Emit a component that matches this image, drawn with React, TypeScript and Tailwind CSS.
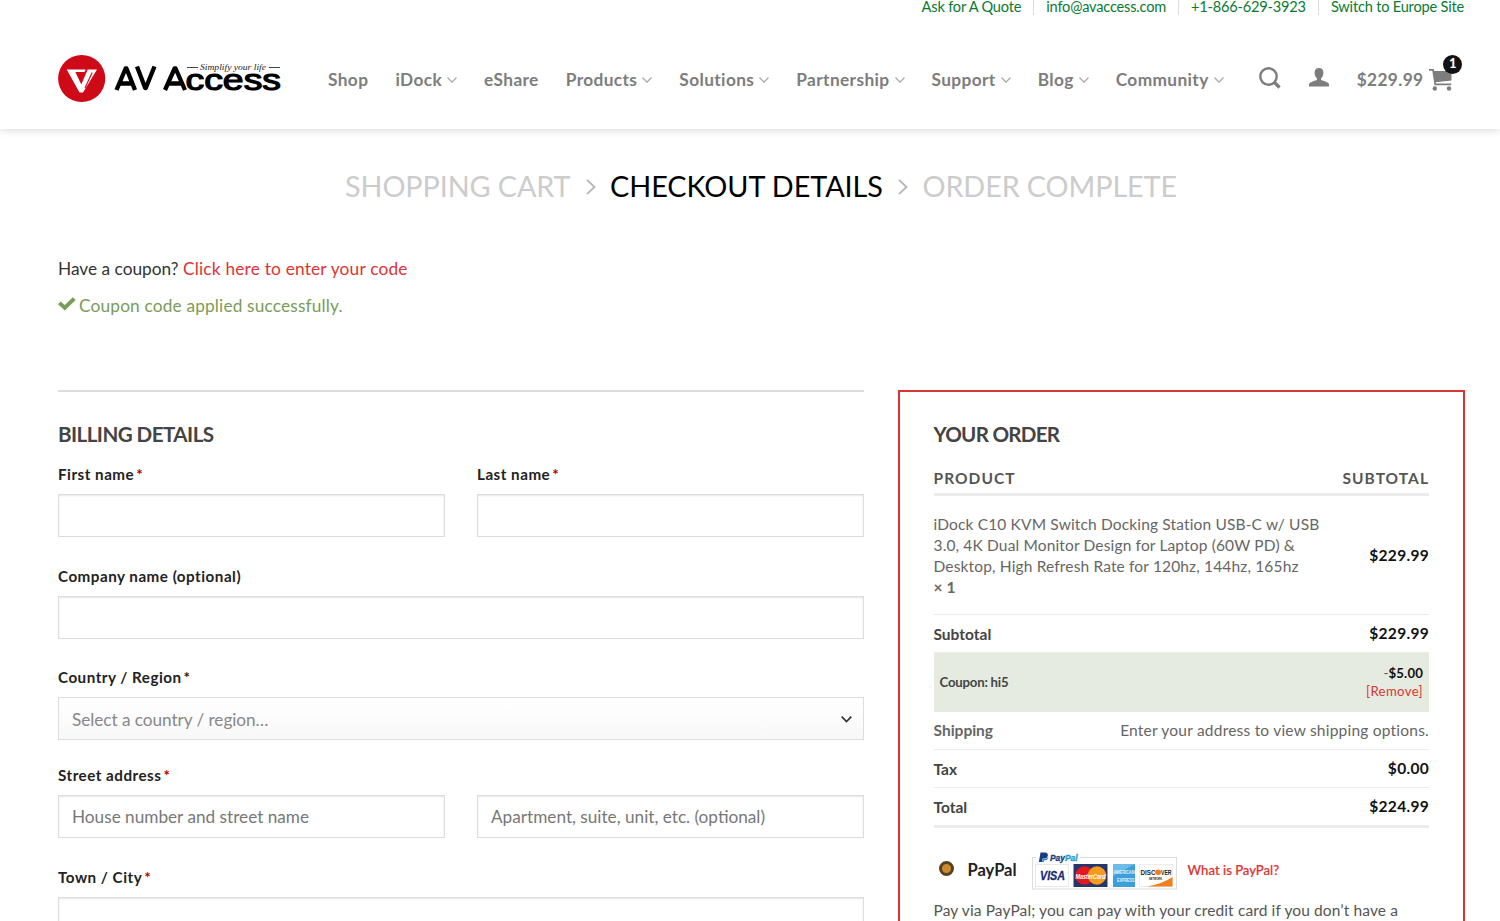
import React from 'react'
import clsx from 'clsx'

interface NavItem {
    label: string
    hasMenu?: boolean
}

interface FieldProps {
    label: string
    required?: boolean
    placeholder?: string
    className?: string
}

const NAV_ITEMS: NavItem[] = [
    { label: 'Shop' },
    { label: 'iDock', hasMenu: true },
    { label: 'eShare' },
    { label: 'Products', hasMenu: true },
    { label: 'Solutions', hasMenu: true },
    { label: 'Partnership', hasMenu: true },
    { label: 'Support', hasMenu: true },
    { label: 'Blog', hasMenu: true },
    { label: 'Community', hasMenu: true },
]

const TOP_LINKS = ['Ask for A Quote', 'info@avaccess.com', '+1-866-629-3923', 'Switch to Europe Site']

const Logo = () => (
    <svg width="224" height="50" viewBox="0 0 224 50" className="block">
        <circle cx="23.7" cy="24.5" r="23.6" fill="#cf0a18" />
        <path d="M8.700 15.500H27.800l-1.400 2.500H17.300L23.300 30.500 29.700 15.500H39L25 38.500H21.500z" fill="#fff" />
        <path d="M34.200 18.500 27 34" stroke="#cf0a18" strokeWidth="1.100" />
        <g fill="none" stroke="#000" strokeWidth="4.300" strokeLinejoin="round">
            <path d="M58.500 36 67.600 14.500h.9L77 36M61.800 29.500h12" />
            <path d="M79 12.500 87.200 34h.6L96.500 12.500" />
            <path d="M107 36 116.600 14.500h1L127 36M110.800 29.500h13" />
        </g>
        <text
            x="127.5"
            y="35.500"
            textLength="95.5"
            lengthAdjust="spacingAndGlyphs"
            fontFamily="Liberation Sans, sans-serif"
            fontSize="29.500"
            stroke="#000"
            strokeWidth="1.2"
        >
            ccess
        </text>
        <path d="M129 13.500h11M211 13.500h11" stroke="#444" />
        <text
            x="142"
            y="15.500"
            textLength="66"
            lengthAdjust="spacingAndGlyphs"
            fontFamily="Liberation Serif, serif"
            fontStyle="italic"
            fontSize="7.500"
            fill="#222"
        >
            Simplify your life
        </text>
    </svg>
)

const CardLogos = () => (
    <svg width="146" height="38" viewBox="0 0 146 38" className="block">
        <rect x="0.5" y="5.5" width="144" height="31.5" fill="#fff" stroke="#ddd" />
        <rect x="4" y="0" width="44" height="11" fill="#fff" />
        <path d="M8.5 0.5h4.2c2.6 0 3.5 1.3 3.1 3.2-.4 2-1.8 2.9-3.9 2.9h-1.2L10 10H6.900z" fill="#1b3a80" />
        <path d="M11 6.800h1.600c2 0 3.100-.9 3.500-2.600.6 2.300-.5 4-3 4h-.9L11.800 10H9.900z" fill="#1f97d4" />
        <text
            x="18"
            y="9"
            textLength="27.5"
            lengthAdjust="spacingAndGlyphs"
            fontFamily="Liberation Sans, sans-serif"
            fontStyle="italic"
            fontWeight="700"
            fontSize="8.5"
            fill="#1b3a80"
            stroke="#1b3a80"
            strokeWidth="0.3"
        >
            Pay
            <tspan fill="#1f97d4" stroke="#1f97d4">
                Pal
            </tspan>
        </text>
        <rect x="3.5" y="12.5" width="33" height="22" fill="#fff" stroke="#e8e8e8" />
        <text
            x="8"
            y="28"
            textLength="25"
            lengthAdjust="spacingAndGlyphs"
            fontFamily="Liberation Sans, sans-serif"
            fontStyle="italic"
            fontWeight="700"
            fontSize="12"
            fill="#1b2a75"
            stroke="#1b2a75"
            strokeWidth="0.3"
        >
            VISA
        </text>
        <rect x="41.5" y="12" width="34" height="23" fill="#28356b" />
        <circle cx="52.5" cy="23.5" r="9.2" fill="#e4161f" />
        <circle cx="65" cy="23.5" r="9.2" fill="#f59c1e" />
        <text
            x="43.5"
            y="26.5"
            textLength="30"
            lengthAdjust="spacingAndGlyphs"
            fontFamily="Liberation Sans, sans-serif"
            fontStyle="italic"
            fontWeight="700"
            fontSize="8"
            fill="#fff"
        >
            MasterCard
        </text>
        <rect x="81" y="12" width="22" height="23" fill="#3d9fd8" />
        <path d="M81 12h22l-22 12z" fill="#6dbbe8" />
        <g fontFamily="Liberation Sans, sans-serif" fontWeight="700" fontSize="6" fill="#e4f4fc">
            <text x="81.5" y="22" textLength="21" lengthAdjust="spacingAndGlyphs">
                AMERICAN
            </text>
            <text x="85" y="30" textLength="17.5" lengthAdjust="spacingAndGlyphs">
                EXPRESS
            </text>
        </g>
        <rect x="107.5" y="12.5" width="33" height="22" fill="#fff" stroke="#eee" />
        <path d="M115 34.5Q131 31.5 140.5 25v9.500z" fill="#f0801f" />
        <circle cx="126.2" cy="20.3" r="2.8" fill="#f0801f" />
        <g fontFamily="Liberation Sans, sans-serif" fontWeight="700" fill="#222">
            <text x="108.5" y="23" textLength="15" lengthAdjust="spacingAndGlyphs" fontSize="7">
                DISC
            </text>
            <text x="129" y="23" textLength="10.5" lengthAdjust="spacingAndGlyphs" fontSize="7">
                VER
            </text>
            <text x="117" y="28" textLength="13" lengthAdjust="spacingAndGlyphs" fontSize="3">
                NETWORK
            </text>
        </g>
    </svg>
)

const Label = ({ text, required, dark }: { text: string; required?: boolean; dark?: boolean }) => (
    <label className="flex h-[38px] items-center gap-[2px] text-[15.2px] leading-none font-bold tracking-[0.5px] text-[#222]">
        {text}
        {required && <span className={dark ? 'text-[#222]' : 'text-[#b20000]'}>*</span>}
    </label>
)

const inputClass =
    'block h-[43px] w-full border border-[#ddd] bg-white px-[13px] text-[17.2px] text-[#333] shadow-[inset_0_1px_2px_rgba(0,0,0,0.1)] outline-none placeholder:text-[#777]'

const Field = ({ label, required, placeholder, className }: FieldProps) => (
    <div className={clsx('flex-1', className)}>
        <Label text={label} required={required} />
        <input type="text" placeholder={placeholder} className={inputClass} />
    </div>
)

const Header = () => (
    <header className="h-[129px] bg-white shadow-[0_1px_8px_rgba(0,0,0,0.16)]">
        <div className="flex h-[15px] justify-end pr-[36px] text-[14.6px] leading-[14px] tracking-[-0.2px] text-[#0a7a33]">
            {TOP_LINKS.map((link, index) => (
                <a key={link} className={clsx('flex items-center', index > 0 && 'ml-3 border-l border-[#ddd] pl-3')}>
                    <span className="block h-[18px] leading-[16px]">{link}</span>
                </a>
            ))}
        </div>
        <div className="flex h-[114px] items-start pt-[39px] pl-[58px]">
            <Logo />
            <nav className="ml-[46px] flex h-[51px] items-center gap-[27px] text-[17.3px] font-bold tracking-[0.38px] text-[#7d7d7d]">
                {NAV_ITEMS.map(({ label, hasMenu }) => (
                    <a key={label} className="flex items-center">
                        {label}
                        {hasMenu && (
                            <svg
                                viewBox="0 0 10 6"
                                className="ml-[5px] h-[6px] w-[10px] text-[#aaa]"
                                fill="none"
                                stroke="currentColor"
                                strokeWidth="1.3"
                            >
                                <path d="M0.5 0.5 5 5.2 9.5 0.5" />
                            </svg>
                        )}
                    </a>
                ))}
            </nav>
            <div className="ml-[35px] flex h-[51px] items-center text-[#7d7d7d]">
                <svg width="22" height="22" viewBox="0 0 22 22" fill="none" stroke="currentColor" className="-mt-1">
                    <circle cx="9.5" cy="9.5" r="8.2" strokeWidth="2.4" />
                    <path d="m15.5 15.5 5 5" strokeWidth="3.2" />
                </svg>
                <svg width="20" height="19" viewBox="0 0 20 19" fill="currentColor" className="-mt-1 ml-[28px]">
                    <path d="M10 0c3 0 4.4 1.9 4.4 4.7 0 2.2-.9 4.4-2.3 5.5v1.900c3 1 7.2 2.2 7.8 4 .2.7.1 1.900.1 2.400H0c0-.5-.1-1.700.1-2.400.6-1.800 4.800-3 7.800-4v-1.900C6.500 9.100 5.600 6.900 5.600 4.700 5.600 1.900 7 0 10 0z" />
                </svg>
                <span className="ml-[28px] text-[17.3px] font-bold tracking-[0.35px]">$229.99</span>
                <div className="relative ml-[6px]">
                    <svg width="23" height="22" viewBox="0 0 23 22" fill="currentColor">
                        <path d="M0 0h4.700l.5 2H22.500v9.500L6.600 13.300l.3 1.200h15.400v1.700H5.500L3.300 1.700H0z" />
                        <circle cx="5.8" cy="19.5" r="2.2" />
                        <circle cx="20" cy="19.5" r="2.2" />
                    </svg>
                    <span className="absolute -top-[14px] left-[14px] flex h-[19px] w-[19px] items-center justify-center rounded-full bg-[#111] text-[13px] font-black text-white">
                        1
                    </span>
                </div>
            </div>
        </div>
    </header>
)

const BreadcrumbArrow = () => (
    <svg
        viewBox="0 0 10 16"
        className="mr-[14px] ml-[15.5px] h-[16px] w-[10px]"
        fill="none"
        stroke="#b5b5b5"
        strokeWidth="1.8"
    >
        <path d="M1 0.8 8.5 8 1 15.2" />
    </svg>
)

const Breadcrumbs = () => (
    <div className="ml-[345px] flex h-[115px] items-center text-[28.8px] tracking-[-0.1px] text-[#ccc]">
        <span>SHOPPING CART</span>
        <BreadcrumbArrow />
        <span className="tracking-[-0.05px] text-black">CHECKOUT DETAILS</span>
        <BreadcrumbArrow />
        <span>ORDER COMPLETE</span>
    </div>
)

const BillingDetails = () => (
    <section className="w-[806px] border-t-2 border-[#ddd]">
        <h3 className="mt-[29px] h-[35px] text-[20.6px] leading-[26px] font-bold tracking-[-0.55px] text-[#444]">
            BILLING DETAILS
        </h3>
        <div className="flex gap-[32px]">
            <Field label="First name" required />
            <Field label="Last name" required />
        </div>
        <Field label="Company name (optional)" className="mt-[21px]" />
        <div className="mt-[20px]">
            <Label text="Country / Region" required dark />
            <div className="flex h-[43px] items-center justify-between border border-[#ddd] bg-gradient-to-b from-white to-[#f8f8f8] px-[13px] pt-[2px] text-[17.2px] tracking-[-0.05px] text-[#888]">
                Select a country / region…
                <svg
                    width="11"
                    height="7"
                    viewBox="0 0 11 7"
                    fill="none"
                    stroke="#333"
                    strokeWidth="1.7"
                    className="-mr-[2px]"
                >
                    <path d="M0.7 0.7 5.5 5.5 10.3 0.7" />
                </svg>
            </div>
        </div>
        <div className="mt-[17px] flex items-end gap-[32px]">
            <Field label="Street address" required placeholder="House number and street name" />
            <div className="flex-1">
                <input type="text" placeholder="Apartment, suite, unit, etc. (optional)" className={inputClass} />
            </div>
        </div>
        <Field label="Town / City" required className="mt-[21px]" />
    </section>
)

const TotalRow = ({ label, value, className }: { label: string; value: string; className?: string }) => (
    <div className={clsx('flex items-center justify-between border-b border-[#ececec] pt-[2px] font-bold', className)}>
        <span className="text-[#444]">{label}</span>
        <span className="pb-[2px] tracking-[0.3px] text-[#111]">{value}</span>
    </div>
)

const OrderSummary = () => (
    <section className="h-[600px] w-[567px] border-2 border-[#dd3333] pr-[34px] pl-[33.5px] text-[15.5px]">
        <h3 className="mt-[29px] h-[35px] text-[20.6px] leading-[26px] font-bold tracking-[-0.75px] text-[#444]">
            YOUR ORDER
        </h3>
        <div className="flex h-[40px] items-center justify-between border-b-3 border-[#ececec] pt-[8px] text-[15.5px] font-bold tracking-[1.05px] text-[#555]">
            <span>PRODUCT</span>
            <span>SUBTOTAL</span>
        </div>
        <div className="flex h-[119px] items-center justify-between border-b border-[#ececec] pt-[1px]">
            <p className="w-[392px] leading-[21px] tracking-[0.15px] text-[#666]">
                iDock C10 KVM Switch Docking Station USB-C w/ USB
                <br />
                3.0, 4K Dual Monitor Design for Laptop (60W PD) &amp;
                <br />
                Desktop, High Refresh Rate for 120hz, 144hz, 165hz
                <br />
                <strong>× 1</strong>
            </p>
            <span className="font-bold tracking-[0.3px] text-[#111]">$229.99</span>
        </div>
        <TotalRow label="Subtotal" value="$229.99" className="h-[38px]" />
        <div className="flex h-[59px] items-center justify-between bg-[#e5ebe0] px-[6px] text-[13.2px]">
            <span className="font-bold tracking-[-0.2px] text-[#444]">Coupon: hi5</span>
            <div className="pb-[1px] text-right leading-[18px]">
                <div className="text-[#555]">
                    -<strong className="tracking-[0.15px] text-[#111]">$5.00</strong>
                </div>
                <a className="tracking-[0.35px] text-[#dd3333]">[Remove]</a>
            </div>
        </div>
        <div className="flex h-[38px] items-center justify-between border-b border-[#ececec] text-[#666]">
            <span className="font-bold">Shipping</span>
            <span className="tracking-[0.22px]">Enter your address to view shipping options.</span>
        </div>
        <TotalRow label="Tax" value="$0.00" className="h-[38px]" />
        <TotalRow label="Total" value="$224.99" className="h-[40px] border-b-3" />
        <div className="mt-[24px] flex h-[38px] items-center">
            <span className="mb-[5px] ml-[5px] h-[15px] w-[15px] rounded-full border-[3px] border-[#57431f] bg-[#cc8a33]" />
            <span className="mb-[2px] ml-[14px] text-[16.5px] font-bold text-[#222]">PayPal</span>
            <div className="ml-[15px]">
                <CardLogos />
            </div>
            <a className="ml-[10px] text-[13.1px] font-medium text-[#dd3333] [-webkit-text-stroke:0.2px_#dd3333]">
                What is PayPal?
            </a>
        </div>
        <p className="mt-[8px] leading-[24px] tracking-[0.12px] text-[#555]">
            Pay via PayPal; you can pay with your credit card if you don’t have a
        </p>
    </section>
)

const App = () => (
    <div className="h-[921px] w-[1500px] overflow-hidden bg-white font-['Lato',sans-serif] whitespace-nowrap">
        <Header />
        <Breadcrumbs />
        <div className="ml-[58px] h-[146px] pt-[11px] text-[17.3px]">
            <p className="h-[28px] leading-[28px] text-[#333]">
                Have a coupon? <a className="tracking-[0.2px] text-[#dd3333]">Click here to enter your code</a>
            </p>
            <p className="mt-[9px] flex h-[28px] items-center tracking-[0.16px] text-[#7a9c59]">
                <svg width="18" height="14" viewBox="0 0 18 14" fill="currentColor" className="-mt-1 mr-[3px]">
                    <path d="M0 7.2 2.7 4.500 6.800 8 14.800.3 17.700 3 6.800 13.500z" />
                </svg>
                Coupon code applied successfully.
            </p>
        </div>
        <main className="ml-[58px] flex items-start gap-[34px]">
            <BillingDetails />
            <OrderSummary />
        </main>
    </div>
)

export default App
